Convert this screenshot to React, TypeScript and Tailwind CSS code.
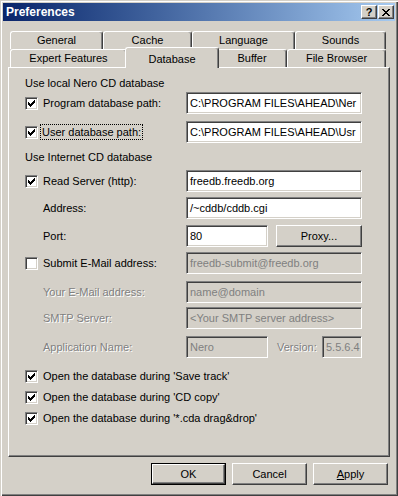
import React from 'react';

// Win2000 style bevels
const raised =
  'bg-[#d4d0c8] border border-t-white border-l-white border-r-[#404040] border-b-[#404040] shadow-[inset_-1px_-1px_0_#808080]';
const sunken =
  'border border-t-[#808080] border-l-[#808080] border-r-white border-b-white shadow-[inset_1px_1px_0_#404040,inset_-1px_-1px_0_#d4d0c8]';
const disabledText = 'text-[#808080] [text-shadow:1px_1px_0_#fff]';

const CheckMark = () => (
  <svg width="7" height="7" viewBox="0 0 7 7" shapeRendering="crispEdges">
    <rect x="0" y="2" width="1" height="3" fill="#000" />
    <rect x="1" y="3" width="1" height="3" fill="#000" />
    <rect x="2" y="4" width="1" height="3" fill="#000" />
    <rect x="3" y="3" width="1" height="3" fill="#000" />
    <rect x="4" y="2" width="1" height="3" fill="#000" />
    <rect x="5" y="1" width="1" height="3" fill="#000" />
    <rect x="6" y="0" width="1" height="3" fill="#000" />
  </svg>
);

const Checkbox = ({ checked }: { checked: boolean }) => (
  <div className={`w-[13px] h-[13px] bg-white flex items-center justify-center shrink-0 ${sunken}`}>
    {checked && <CheckMark />}
  </div>
);

const CloseGlyph = () => (
  <svg width="8" height="7" viewBox="0 0 8 7" shapeRendering="crispEdges">
    <path d="M0 0h2v1H0zM6 0h2v1H6zM1 1h2v1H1zM5 1h2v1H5zM2 2h4v1H2zM3 3h2v1H3zM2 4h4v1H2zM1 5h2v1H1zM5 5h2v1H5zM0 6h2v1H0zM6 6h2v1H6z" fill="#000" />
  </svg>
);

const Input = ({ value, w, disabled }: { value: string; w: string; disabled?: boolean }) => (
  <div
    className={`h-[22px] ${w} ${sunken} ${disabled ? 'bg-[#d4d0c8] text-[#808080]' : 'bg-white text-black'} flex items-center pl-[3px] overflow-hidden whitespace-nowrap`}
  >
    {value}
  </div>
);

const Tab = ({ label, w }: { label: string; w: string }) => (
  <div
    className={`${w} h-[18px] flex items-center justify-center rounded-t-[3px] border-t border-l border-r border-t-white border-l-white border-r-[#404040] shadow-[inset_-1px_0_0_#808080] pb-[1px]`}
  >
    {label}
  </div>
);

const App = () => {
  return (
    <div className="w-[398px] h-[496px] bg-[#d4d0c8] p-[3px] flex flex-col font-['Liberation_Sans',Arial,sans-serif] text-[11px] text-black shadow-[inset_1px_1px_0_#d4d0c8,inset_2px_2px_0_#fff,inset_-1px_-1px_0_#404040,inset_-2px_-2px_0_#808080]">
      {/* Title bar */}
      <div className="h-[18px] shrink-0 bg-gradient-to-r from-[#0a246a] to-[#a6caf0] flex items-center pl-[3px] pr-[1px]">
        <span className="text-white font-bold text-[12px] leading-none">Preferences</span>
        <div className="ml-auto flex gap-[1px]">
          <div className={`w-[16px] h-[14px] ${raised} flex items-center justify-center font-bold text-[11px] leading-none`}>?</div>
          <div className={`w-[16px] h-[14px] ${raised} flex items-center justify-center`}>
            <CloseGlyph />
          </div>
        </div>
      </div>

      <div className="flex-1 flex flex-col px-[5px] pt-[10px]">
        {/* Tabs */}
        <div className="flex ml-[2px]">
          <Tab label="General" w="w-[93px]" />
          <Tab label="Cache" w="w-[89px]" />
          <Tab label="Language" w="w-[103px]" />
          <Tab label="Sounds" w="w-[91px]" />
        </div>
        <div className="flex items-start ml-[2px]">
          <Tab label="Expert Features" w="w-[117px]" />
          <div className="relative z-10 w-[94px] -mx-[2px] h-[21px] -mt-[2px] -mb-[1px] bg-[#d4d0c8] flex items-start justify-center pt-[3px] rounded-t-[3px] border-t border-l border-r border-t-white border-l-white border-r-[#404040] shadow-[inset_-1px_0_0_#808080]">
            Database
          </div>
          <Tab label="Buffer" w="w-[70px]" />
          <Tab label="File Browser" w="w-[99px]" />
        </div>

        {/* Panel */}
        <div className="h-[390px] border border-t-white border-l-white border-r-[#404040] border-b-[#404040] shadow-[inset_-1px_-1px_0_#808080] pl-[16px] pt-[8px] flex flex-col">
          <div className="h-[14px] flex items-center">Use local Nero CD database</div>

          <div className="h-[22px] mt-[2px] flex items-center">
            <div className="w-[161px] flex items-center gap-[5px]">
              <Checkbox checked />
              <span>Program database path:</span>
            </div>
            <Input value="C:\PROGRAM FILES\AHEAD\Ner" w="w-[176px]" />
          </div>

          <div className="h-[22px] mt-[7px] flex items-center">
            <div className="w-[161px] flex items-center gap-[3px]">
              <Checkbox checked />
              <span className="outline outline-1 outline-dotted outline-black px-[1px] leading-[14px]">User database path:</span>
            </div>
            <Input value="C:\PROGRAM FILES\AHEAD\Usr" w="w-[176px]" />
          </div>

          <div className="h-[14px] mt-[7px] flex items-center">Use Internet CD database</div>

          <div className="h-[22px] mt-[6px] flex items-center">
            <div className="w-[161px] flex items-center gap-[5px]">
              <Checkbox checked />
              <span>Read Server (http):</span>
            </div>
            <Input value="freedb.freedb.org" w="w-[176px]" />
          </div>

          <div className="h-[22px] mt-[5px] flex items-center">
            <div className="w-[161px] pl-[18px]">Address:</div>
            <Input value="/~cddb/cddb.cgi" w="w-[176px]" />
          </div>

          <div className="h-[22px] mt-[6px] flex items-center">
            <div className="w-[161px] pl-[18px]">Port:</div>
            <Input value="80" w="w-[82px]" />
            <div className={`ml-[8px] w-[86px] h-[22px] ${raised} flex items-center justify-center`}>Proxy...</div>
          </div>

          <div className="h-[22px] mt-[5px] flex items-center">
            <div className="w-[161px] flex items-center gap-[5px]">
              <Checkbox checked={false} />
              <span>Submit E-Mail address:</span>
            </div>
            <Input value="freedb-submit@freedb.org" w="w-[176px]" disabled />
          </div>

          <div className="h-[22px] mt-[7px] flex items-center">
            <div className={`w-[161px] pl-[18px] ${disabledText}`}>Your E-Mail address:</div>
            <Input value="name@domain" w="w-[176px]" disabled />
          </div>

          <div className="h-[22px] mt-[4px] flex items-center">
            <div className={`w-[161px] pl-[18px] ${disabledText}`}>SMTP Server:</div>
            <Input value="<Your SMTP server address>" w="w-[176px]" disabled />
          </div>

          <div className="h-[22px] mt-[7px] flex items-center">
            <div className={`w-[161px] pl-[18px] ${disabledText}`}>Application Name:</div>
            <Input value="Nero" w="w-[82px]" disabled />
            <div className={`w-[54px] pl-[9px] ${disabledText}`}>Version:</div>
            <Input value="5.5.6.4" w="w-[40px]" disabled />
          </div>

          <div className="mt-[10px] flex flex-col gap-[5px]">
            {["Open the database during 'Save track'", "Open the database during 'CD copy'", "Open the database during '*.cda drag&drop'"].map((t) => (
              <div key={t} className="h-[16px] flex items-center gap-[5px]">
                <Checkbox checked />
                <span>{t}</span>
              </div>
            ))}
          </div>
        </div>

        {/* Buttons */}
        <div className="mt-[6px] flex justify-end gap-[6px] pr-[2px]">
          <div className="w-[75px] h-[22px] border border-black">
            <div className={`w-full h-full ${raised} flex items-center justify-center`}>OK</div>
          </div>
          <div className={`w-[75px] h-[22px] ${raised} flex items-center justify-center`}>Cancel</div>
          <div className={`w-[75px] h-[22px] ${raised} flex items-center justify-center`}>
            <span>
              <span className="underline">A</span>pply
            </span>
          </div>
        </div>
      </div>
    </div>
  );
};

export default App;
